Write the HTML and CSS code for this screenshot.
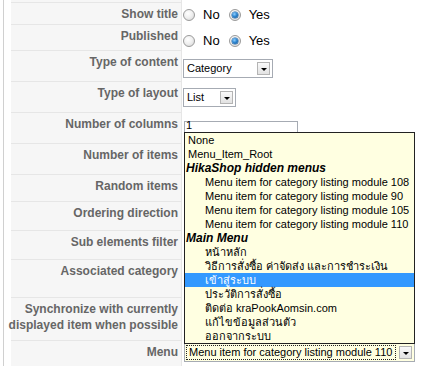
FILE: index.html
```html
<!DOCTYPE html>
<html>
<head>
<meta charset="utf-8">
<link rel="stylesheet" href="styles.css">
</head>
<body>
<div class="panel">
  <div class="row r0"><div class="key"></div><div class="val"></div></div>
  <div class="row r1">
    <div class="key"><span>Show title</span></div>
    <div class="val">
      <div class="radios">
        <span class="radio"></span><span class="opt">No</span>
        <span class="radio on"></span><span class="opt">Yes</span>
      </div>
    </div>
  </div>
  <div class="row r2">
    <div class="key"><span>Published</span></div>
    <div class="val">
      <div class="radios">
        <span class="radio"></span><span class="opt">No</span>
        <span class="radio on"></span><span class="opt">Yes</span>
      </div>
    </div>
  </div>
  <div class="row r3">
    <div class="key"><span>Type of content</span></div>
    <div class="val">
      <div class="select sel-cat"><span class="stxt">Category</span><span class="sbtn"></span></div>
    </div>
  </div>
  <div class="row r4">
    <div class="key"><span>Type of layout</span></div>
    <div class="val">
      <div class="select sel-list"><span class="stxt">List</span><span class="sbtn"></span></div>
    </div>
  </div>
  <div class="row r5">
    <div class="key"><span>Number of columns</span></div>
    <div class="val">
      <div class="input"><span class="itxt">1</span></div>
      <ul class="dropdown">
        <li class="top">None</li>
        <li class="top">Menu_Item_Root</li>
        <li class="grp">HikaShop hidden menus</li>
        <li class="sub">Menu item for category listing module 108</li>
        <li class="sub">Menu item for category listing module 90</li>
        <li class="sub">Menu item for category listing module 105</li>
        <li class="sub">Menu item for category listing module 110</li>
        <li class="grp">Main Menu</li>
        <li class="sub">หน้าหลัก</li>
        <li class="sub">วิธีการสั่งซื้อ ค่าจัดส่ง และการชำระเงิน</li>
        <li class="sub sel">เข้าสู่ระบบ</li>
        <li class="sub">ประวัติการสั่งซื้อ</li>
        <li class="sub">ติดต่อ kraPookAomsin.com</li>
        <li class="sub">แก้ไขข้อมูลส่วนตัว</li>
        <li class="sub">ออกจากระบบ</li>
      </ul>
    </div>
  </div>
  <div class="row r6">
    <div class="key"><span>Number of items</span></div>
    <div class="val"></div>
  </div>
  <div class="row r7">
    <div class="key"><span>Random items</span></div>
    <div class="val"></div>
  </div>
  <div class="row r8">
    <div class="key"><span>Ordering direction</span></div>
    <div class="val"></div>
  </div>
  <div class="row r9">
    <div class="key"><span>Sub elements filter</span></div>
    <div class="val"></div>
  </div>
  <div class="row r10">
    <div class="key"><span>Associated category</span></div>
    <div class="val"></div>
  </div>
  <div class="row r11">
    <div class="key"><span>Synchronize with currently</span><span>displayed item when possible</span></div>
    <div class="val"></div>
  </div>
  <div class="row r12">
    <div class="key"><span>Menu</span></div>
    <div class="val">
      <div class="select sel-menu"><span class="stxt"><span class="focus">Menu item for category listing module 110</span></span><span class="sbtn"></span></div>
    </div>
  </div>
</div>
</body>
</html>
```

FILE: styles.css
```css
html, body {
  margin: 0;
  padding: 0;
  background: #fff;
  overflow: hidden;
}
body {
  font-family: "Liberation Sans", Arial, "DejaVu Sans", sans-serif;
}
.panel {
  margin-left: 3px;
  border-left: 1px solid #d0d0d0;
  padding-left: 7px;
  height: 366px;
  box-sizing: border-box;
}
.row {
  display: flex;
}
.key {
  width: 171px;
  flex: none;
  box-sizing: border-box;
  background: #f6f6f6;
  border-bottom: 1px solid #e6e6e6;
  border-right: 1px solid #e6e6e6;
  color: #666;
  font-weight: bold;
  font-size: 12px;
  line-height: 16px;
  padding: 3px 3px 0 0;
  display: flex;
  flex-direction: column;
  align-items: flex-end;
  white-space: nowrap;
}
.val {
  flex: 1;
  position: relative;
  padding-left: 1px;
}
.r0 { height: 3px; }
.r0 .key { padding: 0; }
.r1 { height: 22px; }
.r2 { height: 26px; }
.r3, .r4, .r5, .r6 { height: 31px; }
.r7 { height: 27px; }
.r8, .r9 { height: 29px; }
.r10 { height: 38px; }
.r11 { height: 43px; }
.r12 { height: 30px; }

.r1 .val { padding-top: 6px; }
.r2 .val { padding-top: 10px; }
.r3 .val { padding-top: 8px; }
.r4 .val { padding-top: 6px; }
.r5 .val { padding-top: 8px; padding-left: 2px; }
.r12 .val { padding-top: 2px; padding-left: 2px; }

.radios {
  display: flex;
  align-items: center;
  height: 12px;
  font-size: 13px;
  color: #000;
}
.radio {
  width: 12px;
  height: 12px;
  box-sizing: border-box;
  border-radius: 50%;
  border: 1px solid #9a9a9a;
  background: radial-gradient(circle at 40% 35%, #ffffff 0%, #f0f0f0 45%, #d4d4d4 100%);
  position: relative;
  flex: none;
}
.radio.on::after {
  content: "";
  position: absolute;
  left: 2px;
  top: 2px;
  width: 6px;
  height: 6px;
  border-radius: 50%;
  background: radial-gradient(circle at 40% 35%, #8fd0ff 0%, #2f86d0 45%, #0b4f8f 100%);
  box-shadow: 0 0 0 0.5px #1b5c9a;
}
.opt {
  margin-left: 8px;
  margin-right: 9px;
  line-height: 14px;
}

.select {
  display: flex;
  box-sizing: border-box;
  height: 19px;
  border: 1px solid #a6abb3;
  background: #fff;
  font-size: 11px;
  color: #000;
  align-items: center;
}
.stxt {
  flex: 1;
  padding-left: 3px;
  white-space: nowrap;
  line-height: 15px;
}
.sbtn {
  width: 13px;
  height: 13px;
  margin-right: 2px;
  box-sizing: border-box;
  border: 1px solid #b4b4b4;
  background: linear-gradient(#fafafa, #e2e2e2);
  position: relative;
  flex: none;
}
.sbtn::after {
  content: "";
  position: absolute;
  left: 3px;
  top: 5px;
  border-left: 3px solid transparent;
  border-right: 3px solid transparent;
  border-top: 3px solid #000;
}
.sel-cat { width: 90px; }
.sel-list { width: 53px; }
.sel-menu {
  width: 231px;
  background: #ffffe1;
}
.sel-menu .stxt { padding-left: 1px; }
.focus {
  display: block;
  border: 1px dotted #222;
  padding-left: 2px;
  line-height: 13px;
  margin-right: 3px;
}

.input {
  width: 114px;
  height: 19px;
  box-sizing: border-box;
  border: 1px solid #a6abb3;
  font-size: 11px;
  padding: 0 0 0 1px;
  color: #000;
}
.itxt {
  display: block;
  line-height: 7px;
  height: 7px;
}
.dropdown {
  position: absolute;
  left: 2px;
  top: 19px;
  width: 231px;
  box-sizing: border-box;
  margin: 0;
  padding: 0;
  list-style: none;
  border: 1px solid #222;
  background: #ffffe1;
  font-size: 11px;
  color: #000;
  z-index: 2;
}
.dropdown li {
  height: 14px;
  line-height: 14px;
  white-space: nowrap;
}
.dropdown .top { padding-left: 3px; }
.dropdown .grp {
  padding-left: 1px;
  font-weight: bold;
  font-style: italic;
  font-size: 12px;
}
.dropdown .sub { padding-left: 20px; }
.dropdown .sel {
  background: #3399ff;
  color: #fff;
}
```
